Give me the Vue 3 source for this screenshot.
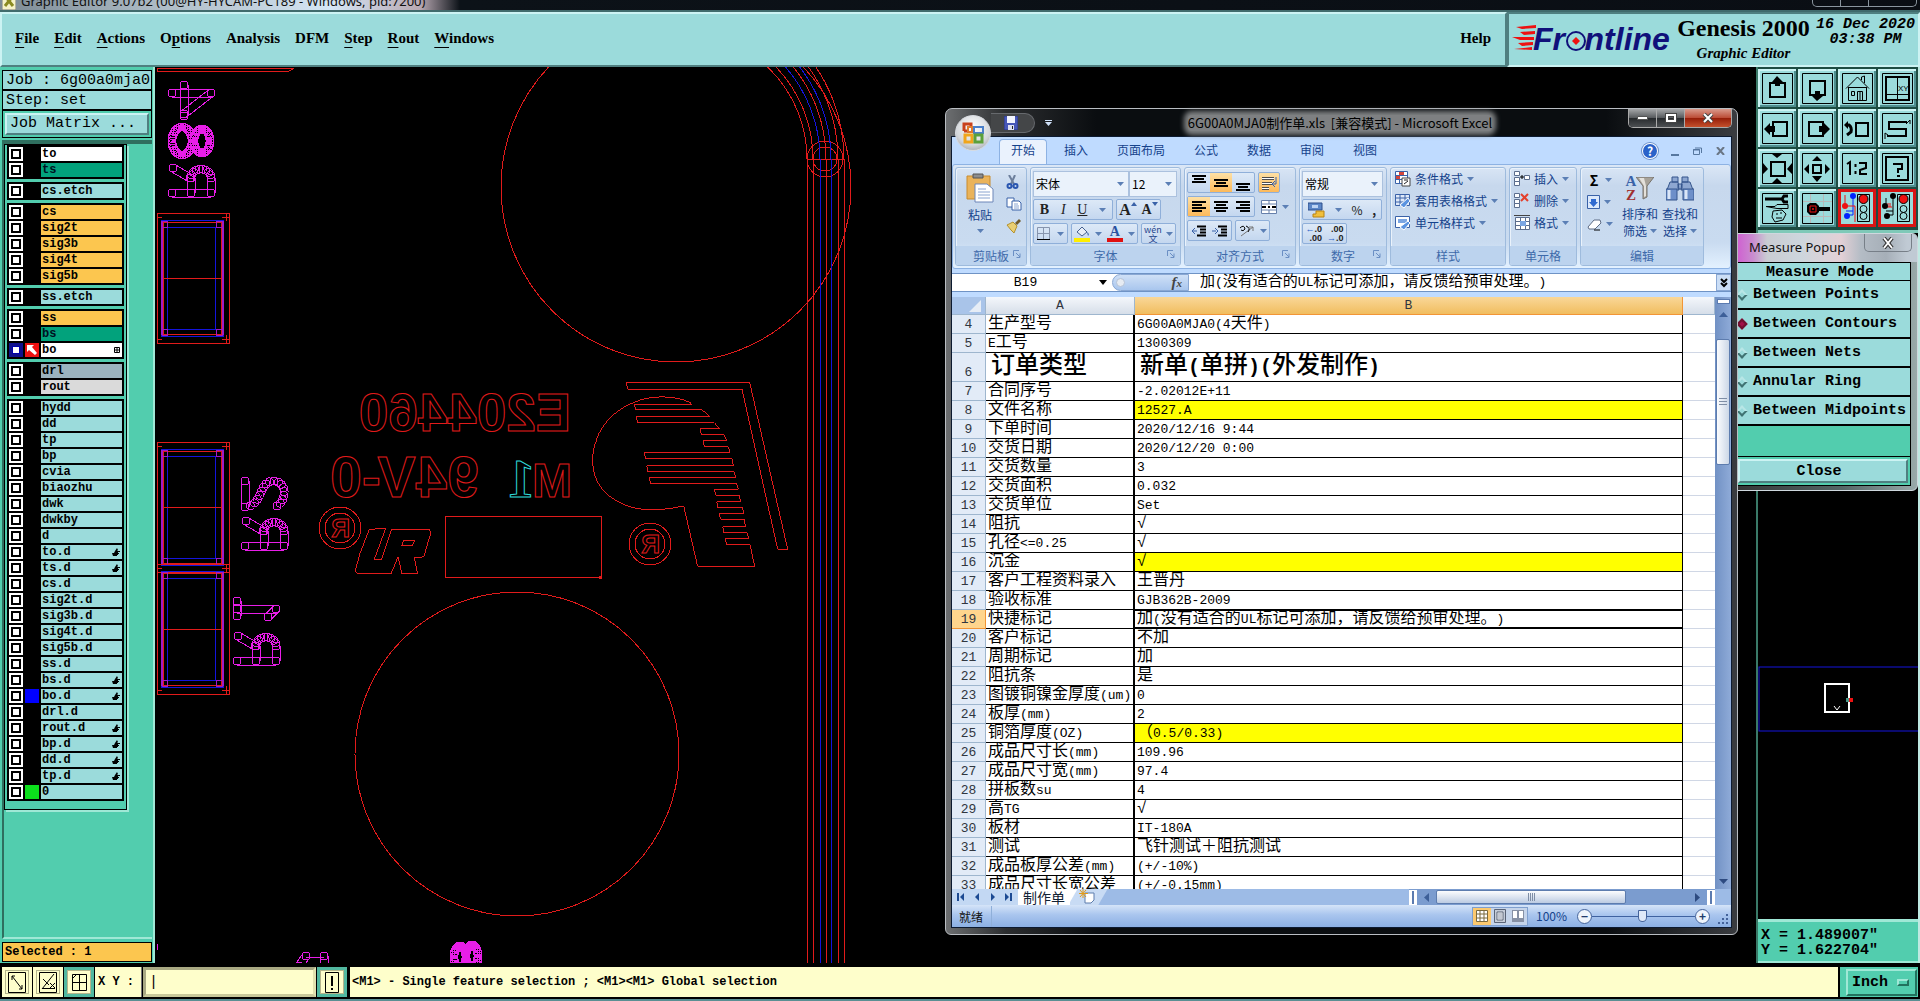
<script setup>
import { h } from 'vue'

const K = '#000'
const Icon = (props) =>
  h(
    'svg',
    { viewBox: `0 0 ${props.w} ${props.h || props.w}`, width: props.w, height: props.h || props.w, 'aria-hidden': 'true', style: 'display:block;flex:none' },
    props.s.map(([d, fill, stroke, sw]) => h('path', { d, fill: fill || 'none', stroke: stroke || 'none', 'stroke-width': sw || 1 }))
  )
Icon.props = ['w', 'h', 's']

const menus = [
  ['', 'F', 'ile'], ['', 'E', 'dit'], ['', 'A', 'ctions'], ['O', 'p', 'tions'], ['Analysis', '', ''],
  ['DFM', '', ''], ['', 'S', 'tep'], ['', 'R', 'out'], ['', 'W', 'indows'],
]

const row = (n, c = 'aqua', x = {}) => ({ n, c, ...x })
const layerGroups = [
  [row('to', 'white'), row('ts', 'green')],
  [row('cs.etch')],
  [row('cs', 'gold'), row('sig2t', 'gold'), row('sig3b', 'gold'), row('sig4t', 'gold'), row('sig5b', 'gold')],
  [row('ss.etch')],
  [row('ss', 'gold'), row('bs', 'green'), row('bo', 'white', { on: true, work: true, grid: true })],
  [row('drl', 'slate'), row('rout', 'grey')],
  [
    ...['hydd', 'dd', 'tp', 'bp', 'cvia', 'biaozhu', 'dwk', 'dwkby', 'd'].map((n) => row(n)),
    row('to.d', 'aqua', { hand: true }), row('ts.d', 'aqua', { hand: true }), row('cs.d'), row('sig2t.d'), row('sig3b.d'),
    row('sig4t.d'), row('sig5b.d'), row('ss.d'), row('bs.d', 'aqua', { hand: true }),
    row('bo.d', 'aqua', { hand: true, chip: 'blue' }), row('drl.d'), row('rout.d', 'aqua', { hand: true }),
    row('bp.d', 'aqua', { hand: true }), row('dd.d', 'aqua', { hand: true }), row('tp.d', 'aqua', { hand: true }),
    row('0', 'aqua', { chip: 'lime' }),
  ],
]
const handIcon = [['M0 5 H2 L3 3 L5 0 L6 2 L5 3 H8 V4 H6 V5 H7 V6 H6 V7 H5 V8 H1 Z', K]]
const arrowIcon = [['M0 0 H14 V14 H0 Z', '#e11'], ['M2 2 H9 L7 4 L12 10 L10 12 L4 7 L2 9 Z', '#fff']]
const gridIcon = [['M0.5 0.5 H5.5 V5.5 H0.5 Z M3 0 V6 M0 3 H6', 'none', K]]

const frame = ['M4.5 4.5 H34.5 V34.5 H4.5 Z', 'none', K]
const tools = [
  { t: 'Pan up', s: [frame, ['M12 14 H27 V28 H12 Z', 'none', K, 2], ['M19 7 L25 13 H22 V17 H17 V13 H14 Z', K]] },
  { t: 'Pan down', s: [frame, ['M12 12 H27 V26 H12 Z', 'none', K, 2], ['M19 32 L25 27 H22 V22 H17 V27 H14 Z', K]] },
  { t: 'Home', s: [frame, ['M8 19.5 L19.5 8 L31 19.5 M10.5 18 V31.5 H28.5 V18 M10 18.5 H29 M23.5 11 V8 L26.5 7 V14 M13.5 22.5 H16.5 V26.5 H13.5 Z M19.5 31 V22.5 H24.5 V31 M22 23 V31', 'none', K]] },
  { t: 'Window XY', xy: true, s: [frame, ['M8 8 H31 V31 H8 Z', 'none', K, 2], ['M19.5 8 V31 M8 25.5 H31', 'none', K]] },
  { t: 'Pan left', s: [frame, ['M15 13 H29 V27 H15 Z', 'none', K, 2], ['M6 20 L12 14 V17 H17 V23 H12 V26 Z', K]] },
  { t: 'Pan right', s: [frame, ['M11 13 H25 V27 H11 Z', 'none', K, 2], ['M32 20 L26 14 V17 H21 V23 H26 V26 Z', K]] },
  { t: 'Previous view', s: [frame, ['M18 14 H30 V27 H18 Z', 'none', K, 2], ['M8 16 H11 Q14 18 13 23 L9 26', 'none', K, 3], ['M6 16 L10 12 V20 Z', K]] },
  { t: 'Serpentine', s: [frame, ['M29 13 H11 V20 H28 V27 H9', 'none', K, 2], ['M28 15 L32 11 M32 11 V15 M10 26 L7 24 M7 24 V30', 'none', K]] },
  { t: 'Zoom out', s: [frame, ['M13 13 H27 V27 H13 Z', 'none', K, 2], ['M14 5 H24 L19 9 Z M14 34 H24 L19 29 Z M5 14 V25 L10 20 Z M34 14 V25 L29 20 Z', K]] },
  { t: 'Zoom in', s: [frame, ['M15 16 H23 V24 H15 Z', 'none', K, 2], ['M14 12 H24 L19 7 Z M14 27 H24 L19 33 Z M11 15 V25 L6 20 Z M27 15 V25 L32 20 Z', K]] },
  { t: 'Scale', s: [frame, ['M9 15 L12 13 V26 M17.5 15 V18 M17.5 22 V25 M21 14 H28 V19 L22 21 V25 H29', 'none', K, 2]] },
  { t: 'Help', s: [frame, ['M8 8 H30 V31 H8 Z', 'none', K, 2], ['M16 16 V15 H24 V20 H20 V24 M19 27 H22', 'none', K, 2]] },
  { t: 'Settings', s: [frame, ['M7 10 H24 M24 10 L26 7 H30 M24 10 L26 13 H30', 'none', K, 3], ['M8 17.5 H17 L19 15.5 H30 V19.5 H19 Z', 'none', K], ['M15 22 L24 21 L28 25 L25 31 L17 33 L14 28 Z M18 25 H20 M22 24 H24 M18 29 H24', 'none', K]] },
  { t: 'Net view', s: [frame, ['M12.5 5 V34 M25.5 5 V34 M5 12.5 H34 M5 27.5 H34', 'none', '#b9b9b9'], ['M20 20 H32', 'none', K, 4], ['M9 16 L12 14 H18 L21 17 V23 L18 26 H12 L9 23 Z', K], ['M12 17 H18 V23 H12 Z M14.5 19.5 H15.5 V20.5 H14.5 Z', 'none', '#e11', 1]] },
  { t: 'Electrical check', red: true, s: [['M15 7 V22 H8 M15 22 V26 H10', 'none', '#02f'], ['M7 17 H17 V33 M7 17 V6', 'none', '#e11'], ['M12 7 A3 3 0 1 0 18 7 A3 3 0 1 0 12 7 M6 27 A3 3 0 1 0 12 27 A3 3 0 1 0 6 27', '#02f'], ['M4 17 A3 3 0 1 0 10 17 A3 3 0 1 0 4 17', '#e11'], ['M19.5 5.5 H31.5 V32.5 H19.5 Z M22 20 A3 3 0 1 0 29 20 A3 3 0 1 0 22 20 M22 27 A3 3 0 1 0 29 27 A3 3 0 1 0 22 27', 'none', K], ['M21 10 A4 4 0 1 0 30 10 A4 4 0 1 0 21 10', '#e11', K]] },
  { t: 'Connectivity check', red: true, s: [['M15 7 V22 H8 M8 17 V9 M15 22 V26 H10', 'none', K], ['M9 18 H14 M10 14 V18 M12 14 V18', 'none', '#e11'], ['M12 7 A3 3 0 1 0 18 7 A3 3 0 1 0 12 7 M6 27 A3 3 0 1 0 12 27 A3 3 0 1 0 6 27 M4 17 A3 3 0 1 0 10 17 A3 3 0 1 0 4 17', K], ['M19.5 5.5 H31.5 V32.5 H19.5 Z M22 20 A3 3 0 1 0 29 20 A3 3 0 1 0 22 20 M22 27 A3 3 0 1 0 29 27 A3 3 0 1 0 22 27', 'none', K], ['M21 10 A4 4 0 1 0 30 10 A4 4 0 1 0 21 10', '#e11', K]] },
]

const modes = ['Between Points', 'Between Contours', 'Between Nets', 'Annular Ring', 'Between Midpoints']

const pads = [
  { y: 213, b: 343, m: 278 },
  { y: 442, b: 572, m: 507 },
  { y: 564, b: 694, m: 629 },
]
const tracks = [
  { x: 807, c: '#e11b1b' }, { x: 813, c: '#e11b1b' }, { x: 820, c: '#1414dc' }, { x: 826, c: '#e11b1b' },
  { x: 831, c: '#1414dc' }, { x: 838, c: '#e11b1b' }, { x: 844, c: '#e11b1b' },
]
const trackPath = (x) => `M${x} 963 V159 A${x - 680} ${x - 680} 0 0 0 680 ${159 - (x - 680)}`

// Legend glyphs are drawn the way the plotter does: round-capped segments and chains of apertures.
const R = 4
const dot = (x, y) => `M${x - R} ${y} a${R} ${R} 0 1 0 ${2 * R} 0 a${R} ${R} 0 1 0 ${-2 * R} 0 `
const capsule = (x1, y1, x2, y2) => {
  const len = Math.hypot(x2 - x1, y2 - y1)
  const nx = (-(y2 - y1) / len) * R
  const ny = ((x2 - x1) / len) * R
  return `M${x1 + nx} ${y1 + ny} L${x2 + nx} ${y2 + ny} M${x1 - nx} ${y1 - ny} L${x2 - nx} ${y2 - ny} ${dot(x1, y1)}${dot(x2, y2)}`
}
const chain = (cx, cy, rx, ry, from, to, step) => {
  let d = ''
  for (let a = from; a <= to; a += step) {
    const t = (a * Math.PI) / 180
    d += dot(cx + rx * Math.cos(t), cy + ry * Math.sin(t))
  }
  return d
}
const bezier = (p, n) => {
  let d = ''
  for (let i = 0; i <= n; i++) {
    const t = i / n
    const u = 1 - t
    const c = [u * u * u, 3 * u * u * t, 3 * u * t * t, t * t * t]
    d += dot(c.reduce((s, k, j) => s + k * p[j][0], 0), c.reduce((s, k, j) => s + k * p[j][1], 0))
  }
  return d
}
const glyphR = (x, y) =>
  capsule(x, y + 25, x + 39, y + 25) + capsule(x + 19, y + 25, x + 19, y + 10) + capsule(x + 39, y + 25, x + 39, y + 10) +
  capsule(x + 1, y, x + 18, y + 10) + chain(x + 29, y + 10, 10, 9, 180, 360, 20)
const legends = [
  glyphR(172, 168), glyphR(245, 521), glyphR(237, 636),
  capsule(172, 93, 211, 93) + capsule(211, 93, 184, 114) + capsule(184, 85, 184, 116),
  capsule(245, 481, 245, 507) + bezier([[245, 507], [264, 505], [258, 481], [274, 481]], 9) + bezier([[274, 481], [287, 482], [287, 500], [277, 506]], 8),
  capsule(237, 601, 237, 616) + capsule(237, 609, 276, 609) + capsule(276, 609, 268, 617),
  capsule(299, 966, 306, 956) + capsule(324, 956, 324, 970) + 'M306 957 H324',
]
const rings = [
  chain(182, 141, 10, 14, 0, 350, 10), chain(202, 141, 8, 12, 0, 350, 10),
  chain(460, 957, 6, 11, 0, 350, 10), chain(472, 956, 6, 11, 0, 350, 10),
]
const emblem =
  'M1003 133 H1175 L1170 127 C1120 105 1050 105 1000 128 C920 160 878 230 878 300 C878 380 930 415 970 433 C1020 455 1080 453 1151 438 L1193 619 H1364 L1350 554 H1280 L1276 536 H1346 L1341 518 H1272 L1268 500 H1337 L1332 478 H1262 L1258 461 H1331 L1328 443 H1254 L1250 425 H1322 L1318 406 H1247 L1243 388 H1315 L1310 371 H1052 L1048 352 H1307 L1303 335 H1044 L1040 317 H1300 L1296 296 H1037 L1033 278 H1290 L1285 260 H1213 L1210 242 H1280 L1271 224 H1204 L1201 206 H1258 L1243 188 H1013 L1009 170 H1229 L1206 149 H1007 Z'

const tabs = ['开始', '插入', '页面布局', '公式', '数据', '审阅', '视图']
const B = '#3a62a8'
const ic = {
  drop: [['M0 0 H7 L3.5 4 Z', '#5b7fb5']],
  dropBig: [['M0 0 H8 L4 5 Z', K]],
  up: [['M0 4 L3 0 L6 4 Z', '#3a62a8']],
  dn: [['M0 0 L3 4 L6 0 Z', '#3a62a8']],
  launch: [['M0.5 6 V0.5 H6 M3 3 L7 7 M7 3.5 V7.5 H3.5', 'none', '#6b8fc4']],
  paste: [['M1 3 H24 V26 H1 Z', '#eab35a', '#c98b2c'], ['M7 1 H17 V5 H7 Z', '#8d8d8d', '#555'], ['M9 11 H21 L27 16 V29 H9 Z', '#fff', '#6c86b8'], ['M12 16 H20 M12 19 H24 M12 22 H24 M12 25 H24', 'none', '#8aa4d0']],
  cut: [['M3 0 L8 9 M9 0 L5 9', 'none', '#6d7f9c', 2], ['M1.5 11 A2 2 0 1 0 5.5 11 A2 2 0 1 0 1.5 11 M7.5 11 A2 2 0 1 0 11.5 11 A2 2 0 1 0 7.5 11', 'none', '#2a56b0', 2]],
  copy: [['M1 1 H8 V10 H1 Z', '#fff', B], ['M6 4 H13 L15 6 V13 H6 Z', '#fff', B], ['M8 7 H12 M8 9 H13 M8 11 H13', 'none', '#8aa4d0']],
  brush: [['M9 4 L13 0 L15 2 L11 6 Z', '#6f5a2b'], ['M1 6 L7 3 L11 7 L8 14 L5 11 Z', '#e9cf73', '#b3902e']],
  border: [['M0.5 0.5 H12.5 V12.5 H0.5 Z M6.5 0 V13 M0 6.5 H13', 'none', '#8795ae'], ['M0 12.5 H13', 'none', K]],
  fill: [['M3 6 L8 1 L13 6 L8 10 Z', '#e8eef8', '#46618f'], ['M13 6 Q16 8 14 10 Z', B], ['M0 12 H16 V16 H0 Z', '#ffee00']],
  alignT: [['M0 1 H14 M2 4 H12 M0 7 H14', 'none', K, 2]],
  alignM: [['M0 5 H14 M2 8 H12 M0 11 H14', 'none', K, 2]],
  alignB: [['M0 9 H14 M2 12 H12 M0 15 H14', 'none', K, 2]],
  alL: [['M0 1 H14 M0 4 H10 M0 7 H14 M0 10 H10', 'none', K, 2]],
  alC: [['M0 1 H14 M2 4 H12 M0 7 H14 M2 10 H12', 'none', K, 2]],
  alR: [['M0 1 H14 M4 4 H14 M0 7 H14 M4 10 H14', 'none', K, 2]],
  wrap: [['M1 3.5 H13 M1 8.5 H11 M1 13.5 H8', 'none', '#4d4d4d', 3], ['M1 3.5 H13 M1 8.5 H11 M1 13.5 H8', 'none', '#fff'], ['M15 2 V9 H12 M14 6 L11 9 L14 12', 'none', B]],
  merge: [['M0.5 0.5 H15.5 V13.5 H0.5 Z M0 4 H16 M0 10 H16 M8 0 V4 M8 10 V14', '#fff', '#6780ab'], ['M1 7 H5 M11 7 H15', 'none', K, 2], ['M7 6 H9 V8 H7 Z', K]],
  outd: [['M6 1.5 H15 M9 4.5 H15 M9 7.5 H15 M6 10.5 H15', 'none', K, 2], ['M6 6 H2 M4 3 L1 6 L4 9', 'none', B]],
  ind: [['M6 1.5 H15 M9 4.5 H15 M9 7.5 H15 M6 10.5 H15', 'none', K, 2], ['M0 6 H4 M3 3 L6 6 L3 9', 'none', B]],
  orient: [['M2 13 L14 4 M14 8 V4 H10', 'none', '#777'], ['M1 5 Q5 1 6 6 Q4 9 2 7 M7 3 Q12 5 9 9', 'none', K]],
  money: [['M0 1 H14 V8 H0 Z', '#5c87c7', '#2d4f8c'], ['M4 3 H10 V6 H4 Z', '#bcd3f3'], ['M8 9 H16 V15 H5 V12 H8 Z', '#f0bf3c', '#b98312']],
  cond: [['M0.5 0.5 H12.5 V12.5 H0.5 Z M0 4.5 H13 M0 8.5 H13 M4.5 0 V13', '#fff', B], ['M4 1 H9 V4 H4 Z M1 5 H5 V8 H1 Z', '#d3453a'], ['M7 7 H15 V15 H7 Z', '#fff', '#444'], ['M9 9 H13 M9 13 L13 10', 'none', '#222']],
  fmt: [['M0.5 1.5 H14.5 V12.5 H0.5 Z M0 5 H15 M0 9 H15 M5 1 V13 M10 1 V13', '#dfe9f8', B], ['M5 12 L13 5 L15 8 L9 15 Z', '#5a93e0', '#fff']],
  cell: [['M0.5 1.5 H14.5 V12.5 H0.5 Z', '#fff', B], ['M3 4 H12 V8 H3 Z', '#7aa5e2'], ['M5 12 L13 6 L15 8 L9 15 Z', '#5a93e0', '#fff']],
  ins: [['M0.5 0.5 H5.5 V4.5 H0.5 Z M0.5 6.5 H5.5 V10.5 H0.5 Z M0.5 10.5 H5.5 V14.5 H0.5 Z M10.5 4.5 H15.5 V8.5 H10.5 Z', '#fff', '#5b6d8d'], ['M6 6 H10 M8 4 V8', 'none', K]],
  del: [['M0.5 0.5 H5.5 V4.5 H0.5 Z M0.5 6.5 H5.5 V10.5 H0.5 Z M0.5 10.5 H5.5 V14.5 H0.5 Z', '#fff', '#5b6d8d'], ['M7 1 L14 8 M14 1 L7 8', 'none', '#e4402c', 2]],
  form: [['M1.5 2.5 H15.5 V14.5 H1.5 Z M1 6.5 H16 M1 10.5 H16 M6.5 2 V15 M11.5 2 V15', '#fff', '#5b6d8d'], ['M6 6 H12 V11 H6 Z', '#7aa5e2'], ['M0 0.5 H16', 'none', '#444']],
  down: [['M0.5 0.5 H12.5 V13.5 H0.5 Z', '#dce9fb', B], ['M4 4 H9 V7 H11 L6.5 12 L2 7 H4 Z', '#2f6ad0']],
  erase: [['M1 9 L7 2 H13 L14 5 L8 11 H2 Z', '#fff', '#5e6c85'], ['M7 12 H13', 'none', K]],
  funnel: [['M0 0 H18 L11 9 V20 L7 22 V9 Z', '#a8a39a', '#77736c'], ['M3 1 H8 L10 9 V19 L8 20 V9 Z', '#e4e1db']],
  find: [['M6 2 H12 V7 H6 Z M16 2 H22 V7 H16 Z M4 7 H12 L13 15 H1 Z M16 7 H24 L27 15 H15 Z M12 9 H16 V14 H12 Z', '#8ea7d1', '#34558c'], ['M0 14 H11 V25 H0 Z M17 14 H28 V25 H17 Z', '#6d8fc9', '#34558c'], ['M3 15 V24 M20 15 V24', 'none', '#dbe6f7', 3]],
  save: [['M0 0 H14 V14 H0 Z', '#4757b8', '#29347e'], ['M3 0 H11 V7 H3 Z', '#f2f4ff'], ['M4 9 H10 V14 H4 Z', '#dcdff2'], ['M8 10 H9 V13 H8 Z', '#222']],
  office: [['M3 10 V3 H10 V6 M6 10 H3', 'none', '#c8401c', 3], ['M7 6 H11 V11 H7 Z', 'none', '#e07a2c', 2], ['M13 6 H22 V12 H13 Z', 'none', '#4a7fc9', 2], ['M4 14 H11 V21 H4 Z', 'none', '#f0a51c', 3], ['M14 14 H21 V21 H14 Z', 'none', '#5ba03a', 3]],
  navFirst: [['M1 0 V8', 'none', '#1d4a92', 2], ['M7 0 V8 L3 4 Z', '#1d4a92']],
  navPrev: [['M5 0 V8 L1 4 Z', '#1d4a92']],
  navNext: [['M1 0 V8 L5 4 Z', '#1d4a92']],
  navLast: [['M6 0 V8', 'none', '#1d4a92', 2], ['M0 0 V8 L4 4 Z', '#1d4a92']],
  newTab: [['M6 4 H15 V11 L12 14 H6 Z', '#fff', '#5d7dad'], ['M4 0 V9 M0 4.5 H9 M1 1 L7 8 M7 1 L1 8', 'none', '#e09a1a']],
  vNorm: [['M1.5 1.5 H12.5 V12.5 H1.5 Z M1 5 H13 M1 9 H13 M5 1 V13 M9 1 V13', '#fff', '#7b6a3e']],
  vPage: [['M1.5 0.5 H12.5 V13.5 H1.5 Z', '#c5ccd8', '#5a6477'], ['M4 3 H10 V11 H4 Z', '#fff', '#5a6477'], ['M5 5 H9 M5 7 H9 M5 9 H9', 'none', '#8791a5']],
  vBreak: [['M1 1 H13 V13 H1 Z', '#8791a5'], ['M2 2 H6 V9 H2 Z M8 2 H12 V9 H8 Z', '#fff']],
  grip: [['M8 0 H10 V2 H8 Z M4 4 H6 V6 H4 Z M8 4 H10 V6 H8 Z M0 8 H2 V10 H0 Z M4 8 H6 V10 H4 Z M8 8 H10 V10 H8 Z', '#44639b']],
  select: [['M2.5 2.5 H19.5 V22.5 H2.5 Z', 'none', K], ['M6 6 L16 19 M6 10 V6 H9 M16 15 V19 H13', 'none', K]],
  angle: [['M2.5 2.5 H19.5 V22.5 H2.5 Z', 'none', K], ['M17 4 L5 19 M5 18.5 H18 M6 9 L12 15 M13 13 L18 18 M18 13 L13 18', 'none', K]],
  snap: [['M4.5 4.5 H18.5 V20.5 H4.5 Z M11.5 4 V21 M4 12.5 H19 M4 9 L9 4', 'none', K]],
}

const sheet = [
  [4, '生产型号', '6G00A0MJA0(4天件)'], [5, 'E工号', '1300309'], [6, '订单类型', '新单(单拼)(外发制作)', 'big'],
  [7, '合同序号', '-2.02012E+11'], [8, '文件名称', '12527.A', 'hl'], [9, '下单时间', '2020/12/16 9:44'],
  [10, '交货日期', '2020/12/20 0:00'], [11, '交货数量', '3'], [12, '交货面积', '0.032'], [13, '交货单位', 'Set'],
  [14, '阻抗', '√'], [15, '孔径<=0.25', '√'], [16, '沉金', '√', 'hl'], [17, '客户工程资料录入', '王晋丹'],
  [18, '验收标准', 'GJB362B-2009'], [19, '快捷标记', '加(没有适合的UL标记可添加，请反馈给预审处理。)', 'sel'],
  [20, '客户标记', '不加'], [21, '周期标记', '加'], [22, '阻抗条', '是'], [23, '图镀铜镍金厚度(um)', '0'], [24, '板厚(mm)', '2'],
  [25, '铜箔厚度(OZ)', '（0.5/0.33)', 'hl'], [26, '成品尺寸长(mm)', '109.96'], [27, '成品尺寸宽(mm)', '97.4'], [28, '拼板数su', '4'],
  [29, '高TG', '√'], [30, '板材', 'IT-180A'], [31, '测试', '飞针测试＋阻抗测试'], [32, '成品板厚公差(mm)', '(+/-10%)'],
  [33, '成品尺寸长宽公差', '(+/-0.15mm)'],
]
const runs = (t) => t.match(/[\x20-\x7e]+|[^\x20-\x7e]+/g).map((s) => ({ s, latin: s.charCodeAt(0) < 127 }))
const formula = sheet[15][2]
</script>

<template>
  <div class="app">
    <header class="titlebar">
      <Icon :w="14" :h="18" :s="[['M0 0 H14 V18 H0 Z', '#f5f2c8', '#777'], ['M3 4 L11 14 M11 4 L3 14', 'none', '#8a8a20', 3]]" />
      <span>Graphic Editor 9.07b2 (00@HY-HYCAM-PC189 - Windows, pid:7200)</span>
      <i class="caps"><b></b><b></b><b></b></i>
    </header>

    <div class="top">
      <nav class="menubar">
        <button v-for="m in menus" :key="m.join('')">{{ m[0] }}<u>{{ m[1] }}</u>{{ m[2] }}</button>
        <button class="help">Help</button>
      </nav>
      <div class="brand">
        <svg width="162" height="56" viewBox="0 0 162 56" class="logo">
          <path d="M4 13 L24 11 V14 L10 15 Z M8 18 L23 17 V20 L12 21 Z M0 23 L22 23 V26 H8 Z M6 29 L21 28 V31 L10 32 Z M2 35 L20 33 V36 Z" fill="#e11" />
          <text x="21" y="36" class="mark">Fr<tspan fill="none">o</tspan>ntline</text>
          <circle cx="64" cy="27" r="9" fill="none" stroke="#10107a" stroke-width="2" />
          <path d="M64 23 L68 27 L64 31 L60 27 Z" fill="#e11" />
        </svg>
        <div class="product"><strong>Genesis 2000</strong><em>Graphic Editor</em></div>
        <time>16 Dec 2020<br />03:38 PM</time>
      </div>
    </div>

    <main class="work">
      <aside class="side">
        <div class="job">Job : 6g00a0mja0</div>
        <div class="job">Step: set</div>
        <div class="matrix"><button>Job Matrix ...</button></div>
        <div class="panel">
          <div class="layers">
            <div v-for="(g, i) in layerGroups" :key="i" class="group">
              <label v-for="r in g" :key="r.n" class="layer">
                <input type="checkbox" :checked="r.on" />
                <span class="chip" :class="r.chip"><Icon v-if="r.work" :w="14" :s="arrowIcon" /></span>
                <span class="name" :class="r.c">{{ r.n }}<Icon v-if="r.hand" :w="8" :s="handIcon" /><Icon v-if="r.grid" :w="6" :s="gridIcon" /></span>
              </label>
            </div>
          </div>
        </div>
        <div class="selected">Selected : 1</div>
      </aside>

      <section class="canvas">
        <svg class="cad" width="100%" height="100%" shape-rendering="crispEdges">
          <g transform="translate(-155 -67)" fill="none">
            <g stroke="#e11b1b">
              <circle cx="676" cy="187" r="175" />
              <circle cx="517" cy="754" r="162" />
              <path d="M157 68.500 H294 L288 71.500 H157 Z" />
              <circle cx="825" cy="159" r="18" /><circle cx="825" cy="159" r="12" />
              <path d="M807 159.500 H844" />
            </g>
            <path v-for="t in tracks" :key="t.x" :d="trackPath(t.x)" :stroke="t.c" />
            <g v-for="p in pads" :key="p.y">
              <rect x="157" :y="p.y" width="72" :height="p.b - p.y" stroke="#e11b1b" />
              <rect x="161" :y="p.y + 7" width="62" :height="p.b - p.y - 14" stroke="#1414dc" />
              <rect x="163" :y="p.y + 9" width="58" :height="p.b - p.y - 18" stroke="#e11b1b" />
              <path :d="`M161.500 ${p.y + 8} V${p.b - 8} M222.500 ${p.y + 8} V${p.b - 8}`" stroke="#a01ac8" stroke-width="2" />
              <rect x="167" :y="p.y + 14" width="48" :height="p.b - p.y - 28" stroke="#1414dc" />
              <path :d="`M163 ${p.m} H221`" stroke="#e11b1b" />
              <path :d="`M222 ${p.y + 4} h8 m-4 -4 v8 M222 ${p.b - 4} h8 m-4 -4 v8 M157 ${p.y + 4} h5 M157 ${p.b - 4} h5`" stroke="#e11b1b" />
              <path :d="`M162 ${p.y + 8} h5 v6 h-5 M216 ${p.y + 8} h6 v6 h-6 Z M162 ${p.b - 8} h5 v-6 h-5 M216 ${p.b - 8} h6 v-6 h-6 Z`" stroke="#a01ac8" />
            </g>
            <g stroke="#e81ee8">
              <path v-for="d in legends" :key="d" :d="d" />
              <path v-for="d in rings" :key="d" :d="d" />
            </g>
            <g stroke="#e11b1b" class="mirror">
              <text transform="translate(571 431) scale(-1 1)">E204460</text>
              <text transform="translate(572 497) scale(-1 1)" class="em">M</text>
              <text transform="translate(479 497) scale(-1 1)" class="wide94">94V-0</text>
              <text transform="translate(535 497) scale(-1 1)" class="one" stroke="#2fd9d9">1</text>
              <text transform="translate(350 537) scale(-1 1)" class="reg">R</text>
              <text transform="translate(660 553) scale(-1 1)" class="reg">R</text>
            </g>
            <g stroke="#e11b1b">
              <circle cx="340" cy="528" r="21" /><circle cx="340" cy="528" r="15" />
              <circle cx="650" cy="544" r="21" /><circle cx="650" cy="544" r="15" />
              <rect x="445" y="516" width="156" height="61" />
              <rect x="599" y="576" width="2" height="2" fill="#e11b1b" />
            </g>
            <g transform="translate(300 360) scale(0.333333)" stroke="#e11b1b" stroke-width="3">
              <path d="M979 67 H1349 L1463 568 H1433 L1326 88 H983 Z" />
              <path :d="emblem" />
              <path d="M208 508 L257 505 L223 598 H245 L275 508 H388 L392 520 L372 588 L366 592 H343 L353 642 H306 L294 590 L273 642 H172 L166 632 L180 580 Z M312 541 H344 L336 558 H304 Z" />
            </g>
            <path d="M157 944 V950" stroke="#e81ee8" />
          </g>
        </svg>
      </section>

      <aside class="right">
        <div class="tools">
          <button v-for="t in tools" :key="t.t" :aria-label="t.t" :class="{ red: t.red }">
            <Icon :w="38" :s="t.s" /><small v-if="t.xy">XY</small>
          </button>
        </div>
        <div class="overview">
          <svg width="100%" height="66" class="band">
            <rect x="1" y="1" width="400" height="64" fill="none" stroke="#1414dc" />
            <path d="M67 18 H91 V46 H67 Z" fill="none" stroke="#fff" stroke-width="2" />
            <path d="M76 40 L79 44 L82 40" fill="none" stroke="#fff" />
            <path d="M88 32 H95 V36 H88 Z" fill="#e11" />
            <path d="M88 32 H91 V36 H88 Z" fill="#4a9a8a" />
          </svg>
        </div>
        <div class="coords">X = 1.489007"<br />Y = 1.622704"</div>
      </aside>
    </main>

    <footer class="foot">
      <button class="fb" aria-label="Select"><Icon :w="22" :h="25" :s="ic.select" /></button>
      <button class="fb" aria-label="Angle"><Icon :w="22" :h="25" :s="ic.angle" /></button>
      <button class="fb teal" aria-label="Snap grid"><Icon :w="22" :h="25" :s="ic.snap" /></button>
      <label class="xy" for="xy">X Y :</label>
      <input id="xy" type="text" value="|" />
      <button class="fb teal" aria-label="Alert"><Icon :w="22" :h="25" :s="[['M4.500 2.500 H17.500 V22.500 H4.500 Z', 'none', '#000'], ['M11 6 V16 M11 18 V20', 'none', '#000', 2]]" /></button>
      <output class="msg">&lt;M1&gt; - Single feature selection ; &lt;M1&gt;&lt;M1&gt; Global selection</output>
      <div class="units"><button>Inch<i></i></button></div>
    </footer>

    <section class="popup">
      <div class="phead"><span>Measure Popup</span><button aria-label="Close popup"><Icon :w="12" :s="[['M2 1 L10 11 M10 1 L2 11', 'none', '#333', 4], ['M2 1 L10 11 M10 1 L2 11', 'none', '#fff', 2]]" /></button></div>
      <div class="pbody">
        <div class="pmode">Measure Mode</div>
        <label v-for="(m, i) in modes" :key="m"><input type="radio" name="mode" :checked="i === 1" /><span>{{ m }}</span></label>
        <div class="pclose"><button>Close</button></div>
      </div>
    </section>

    <section class="excel">
      <div class="xtitle">
        <div class="qat"><Icon :w="14" :s="ic.save" /></div>
        <Icon :w="7" :h="6" :s="[['M0 0.500 H7', 'none', '#cfe0f8'], ['M0 2 H7 L3.500 6 Z', '#cfe0f8']]" />
        <div class="doc"><span>6G00A0MJA0制作单.xls&nbsp; [兼容模式] - Microsoft Excel</span></div>
        <div class="wctl">
          <button aria-label="Minimise"><Icon :w="12" :h="4" :s="[['M0.500 0.500 H10.500 V3.500 H0.500 Z', '#fff', '#555']]" /></button>
          <button aria-label="Maximise"><Icon :w="12" :h="10" :s="[['M2 2 H10 V8 H2 Z', 'none', '#444', 4], ['M2 2 H10 V8 H2 Z', 'none', '#fff', 2]]" /></button>
          <button class="x" aria-label="Close"><Icon :w="12" :h="10" :s="[['M2 1 L10 9 M10 1 L2 9', 'none', '#444', 4], ['M2 1 L10 9 M10 1 L2 9', 'none', '#fff', 2]]" /></button>
        </div>
      </div>
      <button class="orb" aria-label="Office"><Icon :w="24" :s="ic.office" /></button>

      <div class="client">
        <div class="tabs">
          <button v-for="(t, i) in tabs" :key="t" :class="{ on: i === 0 }">{{ t }}</button>
          <div class="mdi">
            <button class="q" aria-label="Help">?</button>
            <Icon :w="8" :h="10" :s="[['M0 9 H8', 'none', '#56779f', 2]]" />
            <Icon :w="9" :h="8" :s="[['M0.500 2.500 H6.500 V7.500 H0.500 Z M2 1 H8.500 V6 M0 3 H7', 'none', '#56779f']]" />
            <Icon :w="9" :h="8" :s="[['M1 0 L8 8 M8 0 L1 8', 'none', '#6a7685', 2]]" />
          </div>
        </div>

        <div class="ribbon">
          <div class="rg g1">
            <div class="rb">
              <button class="bigb"><Icon :w="28" :h="30" :s="ic.paste" /><span>粘贴</span><Icon :w="7" :h="4" :s="ic.drop" /></button>
              <div class="col3"><Icon :w="13" :h="14" :s="ic.cut" /><Icon :w="16" :h="14" :s="ic.copy" /><Icon :w="16" :h="14" :s="ic.brush" /></div>
            </div>
            <div class="rl">剪贴板<Icon :w="8" :s="ic.launch" /></div>
          </div>

          <div class="rg g2">
            <div class="rb rows">
              <div class="rr tall">
                <div class="combo wide"><select aria-label="字体"><option>宋体</option></select><Icon :w="7" :h="4" :s="ic.drop" /></div>
                <div class="combo size"><select aria-label="字号"><option>12</option></select><Icon :w="7" :h="4" :s="ic.drop" /></div>
              </div>
              <div class="rr">
                <div class="bx w80"><b class="ser">B</b><i class="ser">I</i><u class="ser">U</u><Icon :w="7" :h="4" :s="ic.drop" /></div>
                <div class="bx w45"><span class="az2"><b class="ser lg">A</b><Icon :w="6" :h="4" :s="ic.up" /></span><span class="az2"><b class="ser">A</b><Icon :w="6" :h="4" :s="ic.dn" /></span></div>
              </div>
              <div class="rr">
                <div class="bx w35"><Icon :w="13" :s="ic.border" /><Icon :w="7" :h="4" :s="ic.drop" /></div>
                <div class="bx w67"><Icon :w="16" :s="ic.fill" /><Icon :w="7" :h="4" :s="ic.drop" /><b class="ser acol">A</b><Icon :w="7" :h="4" :s="ic.drop" /></div>
                <div class="bx w35"><span class="wen">wén<br />文</span><Icon :w="7" :h="4" :s="ic.drop" /></div>
              </div>
            </div>
            <div class="rl">字体<Icon :w="8" :s="ic.launch" /></div>
          </div>

          <div class="rg g3">
            <div class="rb rows r3">
              <div class="rr">
                <div class="bx seg"><span><Icon :w="14" :h="16" :s="ic.alignT" /></span><span class="hot"><Icon :w="14" :h="16" :s="ic.alignM" /></span><span><Icon :w="14" :h="16" :s="ic.alignB" /></span></div>
                <div class="bx hot w22"><Icon :w="16" :s="ic.wrap" /></div>
              </div>
              <div class="rr">
                <div class="bx seg"><span class="hot"><Icon :w="14" :h="12" :s="ic.alL" /></span><span><Icon :w="14" :h="12" :s="ic.alC" /></span><span><Icon :w="14" :h="12" :s="ic.alR" /></span></div>
                <div class="mg"><Icon :w="16" :h="14" :s="ic.merge" /><Icon :w="7" :h="4" :s="ic.drop" /></div>
              </div>
              <div class="rr">
                <div class="bx w45"><Icon :w="16" :h="12" :s="ic.outd" /><Icon :w="16" :h="12" :s="ic.ind" /></div>
                <div class="bx w35"><Icon :w="16" :s="ic.orient" /><Icon :w="7" :h="4" :s="ic.drop" /></div>
              </div>
            </div>
            <div class="rl">对齐方式<Icon :w="8" :s="ic.launch" /></div>
          </div>

          <div class="rg g4">
            <div class="rb rows">
              <div class="rr tall"><div class="combo full"><select aria-label="数字格式"><option>常规</option></select><Icon :w="7" :h="4" :s="ic.drop" /></div></div>
              <div class="rr"><div class="bx w80"><Icon :w="17" :h="16" :s="ic.money" /><Icon :w="7" :h="4" :s="ic.drop" /><span>%</span><b>,</b></div></div>
              <div class="rr"><div class="bx w45 dec"><span><em>←</em>.0<br />.00</span><span>.00<br /><em>→</em>.0</span></div></div>
            </div>
            <div class="rl">数字<Icon :w="8" :s="ic.launch" /></div>
          </div>

          <div class="rg g5">
            <div class="rb list">
              <button><Icon :w="16" :s="ic.cond" />条件格式<Icon :w="7" :h="4" :s="ic.drop" /></button>
              <button><Icon :w="16" :s="ic.fmt" />套用表格格式<Icon :w="7" :h="4" :s="ic.drop" /></button>
              <button><Icon :w="16" :s="ic.cell" />单元格样式<Icon :w="7" :h="4" :s="ic.drop" /></button>
            </div>
            <div class="rl">样式</div>
          </div>

          <div class="rg g6">
            <div class="rb list">
              <button><Icon :w="16" :s="ic.ins" />插入<Icon :w="7" :h="4" :s="ic.drop" /></button>
              <button><Icon :w="16" :s="ic.del" />删除<Icon :w="7" :h="4" :s="ic.drop" /></button>
              <button><Icon :w="16" :s="ic.form" />格式<Icon :w="7" :h="4" :s="ic.drop" /></button>
            </div>
            <div class="rl">单元格</div>
          </div>

          <div class="rg g7">
            <div class="rb">
              <div class="list">
                <button><b class="sum">Σ</b><Icon :w="7" :h="4" :s="ic.drop" /></button>
                <button><Icon :w="13" :h="14" :s="ic.down" /><Icon :w="7" :h="4" :s="ic.drop" /></button>
                <button><Icon :w="15" :h="13" :s="ic.erase" /><Icon :w="7" :h="4" :s="ic.drop" /></button>
              </div>
              <button class="bigb two"><span class="az"><span class="ser">A<br /><b>Z</b></span><Icon :w="18" :h="23" :s="ic.funnel" /></span><span>排序和</span><span class="ln">筛选<Icon :w="7" :h="4" :s="ic.drop" /></span></button>
              <button class="bigb two"><span class="az"><Icon :w="28" :h="26" :s="ic.find" /></span><span>查找和</span><span class="ln">选择<Icon :w="7" :h="4" :s="ic.drop" /></span></button>
            </div>
            <div class="rl">编辑</div>
          </div>
        </div>

        <div class="fbar">
          <div class="nbox"><input aria-label="名称框" value="B19" /><Icon :w="8" :h="5" :s="ic.dropBig" /></div>
          <div class="fx"><i></i><span>f<small>x</small></span></div>
          <div class="ftext"><span v-for="(r, i) in runs(formula)" :key="i" :class="{ lat: r.latin }">{{ r.s }}</span></div>
          <button aria-label="展开编辑栏"><Icon :w="8" :h="10" :s="[['M1 1 L4 4 L7 1 M1 5 L4 8 L7 5', 'none', '#000', 2]]" /></button>
        </div>

        <div class="grid">
          <div class="cells">
            <table>
              <colgroup><col class="c0" /><col class="ca" /><col class="cb" /><col /></colgroup>
              <thead><tr><th class="corner"><i></i></th><th>A</th><th class="on">B</th><th></th></tr></thead>
              <tbody>
                <tr v-for="r in sheet" :key="r[0]" :class="r[3]">
                  <th>{{ r[0] }}</th>
                  <td><div><span v-for="(p, i) in runs(r[1])" :key="i" :class="{ lat: p.latin }">{{ p.s }}</span></div></td>
                  <td><div><span v-for="(p, i) in runs(r[2])" :key="i" :class="{ lat: p.latin }">{{ p.s }}</span></div></td>
                  <td></td>
                </tr>
              </tbody>
            </table>
          </div>
          <div class="vs">
            <i class="split"></i><Icon :w="9" :h="5" :s="[['M0 5 H9 L4.500 0 Z', '#3d5f98']]" />
            <i class="thumb"></i><Icon :w="9" :h="5" :s="[['M0 0 H9 L4.500 5 Z', '#2d4a80']]" />
          </div>
        </div>

        <div class="stabs">
          <div class="nav"><Icon :w="8" :s="ic.navFirst" /><Icon :w="6" :h="8" :s="ic.navPrev" /><Icon :w="6" :h="8" :s="ic.navNext" /><Icon :w="8" :s="ic.navLast" /></div>
          <button class="st">制作单</button>
          <div class="nt"><Icon :w="16" :h="15" :s="ic.newTab" /></div>
          <div class="hs">
            <i class="sp"></i><Icon :w="5" :h="9" :s="[['M5 0 V9 L0 4.500 Z', '#3d5f98']]" />
            <i class="ht"></i><Icon :w="5" :h="9" :s="[['M0 0 V9 L5 4.500 Z', '#2d4a80']]" /><i class="sp"></i>
          </div>
        </div>
        <div class="status">
          <span class="ready">就绪</span>
          <div class="views"><span class="hot"><Icon :w="14" :s="ic.vNorm" /></span><span><Icon :w="14" :s="ic.vPage" /></span><span><Icon :w="14" :s="ic.vBreak" /></span></div>
          <span class="pct">100%</span>
          <button class="rnd">−</button>
          <input type="range" aria-label="显示比例" min="0" max="100" value="49" />
          <button class="rnd">+</button>
          <Icon :w="10" :s="ic.grip" />
        </div>
      </div>
    </section>
  </div>
</template>

<style>
body { background: #000; overflow: hidden; }
</style>

<style scoped>
* { box-sizing: border-box; }
button, input, select { font: inherit; color: inherit; border: 0; padding: 0; margin: 0; background: none; border-radius: 0; }
.app { position: relative; height: 100vh; display: flex; flex-direction: column; background: #000; color: #000; font-family: "Liberation Mono", monospace; overflow: hidden; text-spacing-trim: space-all; }

.titlebar { height: 10px; flex: none; display: flex; align-items: flex-end; gap: 5px; padding-left: 2px; overflow: hidden; font: 13px/17px "Noto Sans", sans-serif; color: #111; background: linear-gradient(90deg, #7c8a94 0, #aebcc6 160px, #c3d2de 260px, #d5e6f6 330px, #b8a8b2 420px, #0c1218 460px, #0a0e14 100%); }
.caps { margin-left: auto; margin-right: 3px; display: flex; height: 7px; align-self: flex-start; border: 1px solid #8a959e; border-top: 0; border-radius: 0 0 5px 5px; }
.caps b { width: 28px; border-right: 1px solid #8a959e; }
.caps b:last-child { width: 47px; border: 0; }

.top { display: flex; height: 57px; flex: none; background: #4f7f80; border-top: 2px solid #406b6c; }
.menubar { flex: 1; display: flex; align-items: center; gap: 15px; padding: 0 14px 4px 13px; background: #9bdbdb; border: 2px solid #ccf3f3; border-right-color: #4f7f80; border-bottom-color: #4f7f80; font: bold 15px/18px "Liberation Serif", serif; }
.menubar u { text-underline-offset: 4px; }
.help { margin-left: auto; }
.brand { width: 413px; display: flex; background: #9bdbdb; border: 2px solid #4f7f80; border-right-color: #ccf3f3; border-bottom-color: #ccf3f3; }
.logo { flex: none; margin-left: 3px; }
.mark { font: italic bold 32px "Liberation Sans", sans-serif; fill: #10107a; }
.product { text-align: center; width: 139px; flex: none; font-family: "Liberation Serif", serif; white-space: nowrap; }
.product strong { display: block; font-size: 24px; line-height: 28px; }
.product em { display: block; font-size: 15px; font-weight: bold; line-height: 22px; }
time { flex: 1; text-align: center; white-space: nowrap; font: italic bold 15px/15px "Liberation Mono", monospace; padding-top: 3px; }

.work { flex: 1; min-height: 0; display: flex; }
.side { width: 155px; flex: none; display: flex; flex-direction: column; background: #52cdae; border-right: 2px solid #9fe8d6; padding: 3px 1px 1px 2px; }
.job { height: 20px; flex: none; border: 1px solid #000; background: #9bdbdb; padding-left: 3px; font-size: 15px; line-height: 20px; white-space: nowrap; }
.matrix { border: 1px solid #000; padding: 2px; height: 28px; flex: none; }
.matrix button { width: 100%; height: 22px; text-align: left; padding-left: 3px; font-size: 15px; line-height: 18px; background: #9bdbdb; border: 2px solid #ccf3f3; border-right-color: #4f7f80; border-bottom-color: #4f7f80; }
.panel { flex: 1; min-height: 0; margin-top: 2px; border-top: 4px solid #2f6f5f; border-left: 2px solid #2f6f5f; border-bottom: 2px solid #9fe8d6; margin-bottom: 3px; }
.layers { width: 123px; border: 1px solid #000; padding: 0 2px 8px; display: flex; flex-direction: column; gap: 3px; box-shadow: 2px 2px 0 #9fe8d6; }
.group { background: #000; padding: 1px 2px; }
.layer { display: flex; height: 16px; align-items: center; gap: 2px; }
.layer input { appearance: none; width: 14px; height: 14px; flex: none; background: #fff; border: 2px solid #fff; box-shadow: inset 0 0 0 2px #000; }
.layer input:checked { background: #fff; border: 3px solid #10108c; box-shadow: inset 0 0 0 1px #00a; }
.chip { width: 14px; height: 14px; flex: none; }
.chip.blue { background: #00f; }
.chip.lime { background: #0ce01c; }
.name { flex: 1; height: 14px; display: flex; align-items: center; justify-content: space-between; padding: 0 2px 0 1px; font-size: 12px; font-weight: bold; line-height: 14px; }
.aqua { background: #9bdbdb; } .white { background: #fff; } .green { background: #02a27c; color: #012; } .gold { background: #fcc64f; } .slate { background: #9bb3be; } .grey { background: #dadada; }
.selected { height: 20px; flex: none; border: 1px solid #000; background: #fcc64f; font-size: 12px; font-weight: bold; line-height: 18px; padding-left: 2px; }

.canvas { flex: 1; min-width: 0; background: #000; overflow: hidden; }
.cad { display: block; }
.mirror text { font: bold 53px "Liberation Sans", sans-serif; }
.mirror .em { font-size: 48px; }
.mirror .wide94 { font-size: 57px; }
.mirror .one { font: bold 55px "Liberation Serif", serif; }
.mirror .reg { font-size: 26px; }

.right { width: 164px; flex: none; display: flex; flex-direction: column; border-left: 2px solid #3a7a68; border-right: 2px solid #bfe9e2; }
.tools { display: grid; grid-template-columns: repeat(4, 40px); grid-auto-rows: 40px; border-bottom: 3px solid #7fc9b8; padding-top: 2px; height: 166px; flex: none; background: #1d4c42; }
.tools button { position: relative; width: 38px; height: 38px; background: #9bdbdb; box-shadow: inset 2px 2px 0 #ccf3f3, inset -2px -2px 0 #4f8f8f; overflow: hidden; }
.tools .red { box-shadow: inset 0 0 0 3px #d81414; }
.tools small { position: absolute; left: 20px; top: 15px; font: 8px/10px "Liberation Sans", sans-serif; }
.overview { flex: 1; min-height: 0; display: flex; align-items: center; padding-top: 259px; }
.band { display: block; margin-bottom: 13px; }
.coords { height: 44px; flex: none; background: #52cdae; border-top: 3px solid #9fe8d6; border-bottom: 2px solid #9fe8d6; padding: 6px 3px 0; font-size: 15px; font-weight: bold; line-height: 15px; white-space: nowrap; }

.foot { height: 38px; flex: none; display: flex; background: #000; padding: 4px 2px 2px; border-bottom: 2px solid #5a8f93; gap: 1px; }
.fb { width: 30px; flex: none; background: #fefecb; border: 3px solid #fefecb; display: grid; place-items: center; box-shadow: inset 0 0 0 1px #b5b58c; }
.fb.teal { border-color: #52b8a0; }
.xy { width: 47px; background: #fefecb; font-size: 12px; font-weight: bold; line-height: 30px; padding-left: 3px; white-space: nowrap; border-right: 1px solid #777; }
.foot input { width: 173px; background: #fefecb; border: 3px solid #a9a983; border-right-color: #e1e1ae; border-bottom-color: #c9c99b; padding-left: 3px; font-size: 15px; }
.msg { flex: 1; min-width: 0; background: #fefecb; font-size: 12px; font-weight: bold; line-height: 30px; padding-left: 2px; white-space: nowrap; margin-left: 2px; }
.units { width: 78px; flex: none; background: #52cdae; padding: 2px 1px 1px 6px; margin-left: 1px; }
.units button { width: 100%; height: 27px; display: flex; align-items: center; justify-content: space-between; padding: 0 6px 0 4px; font-size: 15px; font-weight: bold; border: 2px solid #9fe8d6; border-right-color: #22725e; border-bottom-color: #22725e; }
.units i { width: 12px; height: 7px; border: 2px solid #9fe8d6; border-right-color: #22725e; border-bottom-color: #22725e; }

.popup { position: absolute; left: 1730px; right: 2px; top: 233px; height: 258px; border: 1px solid #cfd8de; border-radius: 6px; padding: 0 6px 5px 4px; background: linear-gradient(90deg, #333 0, #566 60%, #9aa 100%); font-weight: bold; font-size: 15px; }
.phead { height: 28px; margin: 0 -6px 0 -4px; display: flex; justify-content: space-between; border-radius: 5px 5px 0 0; background: linear-gradient(90deg, #d24fd2 0, #c98ccf 22px, #c9ccd2 36px, #cdd6dd 70px, #e3d0d6 110px, #b4bcc5 130px, #a6afb8 155px, #c0cad4 176px); }
.phead span { padding-left: 18px; font: 13px/26px "Noto Sans", sans-serif; color: #111; }
.phead button { width: 48px; height: 18px; margin-right: 5px; border: 1px solid #777f88; border-top: 0; border-radius: 0 0 5px 5px; display: grid; place-items: center; }
.pbody { background: #52cdae; border: 1px solid #000; height: 224px; display: flex; flex-direction: column; }
.pmode { height: 18px; background: #9bdbdb; border-bottom: 1px solid #000; text-align: center; line-height: 19px; padding-right: 6px; }
.pbody label { display: flex; align-items: center; height: 29px; background: #9bdbdb; border-bottom: 2px solid #000; gap: 4px; white-space: nowrap; }
.pbody input { appearance: none; width: 8px; height: 8px; flex: none; transform: rotate(45deg); border: 2px solid #b8e6e6; border-right-color: #3f7272; border-bottom-color: #3f7272; margin-left: 2px; }
.pbody input:checked { background: #a01048; border-color: #701030; }
.pbody label span { padding-left: 3px; }
.pclose { margin-top: auto; border-top: 1px solid #000; padding: 2px; }
.pclose button { width: 100%; height: 24px; padding-right: 8px; background: #9bdbdb; border: 2px solid #ccf3f3; border-right-color: #4f7f80; border-bottom-color: #4f7f80; }

.excel { position: absolute; left: 945px; top: 108px; width: 793px; height: 827px; border: 1px solid #b9bdc2; border-radius: 7px 7px 6px 6px; padding: 0 5px 6px; background: linear-gradient(90deg, #6c6e70 0, #2b2d2f 60px, #0a0d10 150px, #0a0d10 660px, #3a3c40 100%); font: 12px/16px "Noto Sans CJK SC", sans-serif; color: #15428b; display: flex; flex-direction: column; }
.xtitle { height: 27px; flex: none; display: flex; align-items: center; position: relative; padding-left: 40px; gap: 10px; }
.qat { width: 44px; height: 20px; border: 1px solid #66696d; border-left: 0; border-radius: 0 10px 10px 0; padding: 2px 0 0 13px; background: #444648; }
.doc { flex: 1; text-align: center; font-size: 13px; line-height: 16px; color: #000; white-space: pre; }
.doc span { display: inline-block; background: #7e8082; box-shadow: 0 0 5px 4px #7e8082; border-radius: 4px; }
.wctl { display: flex; height: 19px; align-self: flex-start; border: 1px solid #aaa; border-top: 0; border-radius: 0 0 5px 5px; overflow: hidden; }
.wctl button { width: 28px; display: grid; place-items: center; border-right: 1px solid #aaa; background: linear-gradient(#a5a7a9, #55585b 50%, #26292c 50%, #4c4f52); }
.wctl .x { width: 46px; border: 0; background: linear-gradient(#d99a8c, #bb4a34 50%, #941c08 50%, #c4502c); }
.orb { position: absolute; left: 9px; top: 6px; width: 36px; height: 36px; border-radius: 50%; display: grid; place-items: center; background: radial-gradient(circle at 50% 35%, #fff, #d5d8dc 60%, #8d9299); border: 1px solid #d8dbe0; z-index: 2; }
.client { flex: 1; min-height: 0; border: 1px solid #0c1a30; background: #bfdbff; display: flex; flex-direction: column; }
.tabs { height: 27px; flex: none; display: flex; align-items: flex-end; gap: 5px; padding-left: 47px; }
.tabs > button { height: 25px; padding: 0 11px 4px; border: 1px solid transparent; border-bottom: 0; }
.tabs .on { background: #eaf2fd; border-color: #8db2e3; border-radius: 4px 4px 0 0; }
.mdi { margin-left: auto; display: flex; align-items: center; gap: 14px; padding: 0 6px 6px; }
.q { width: 14px; height: 14px; border-radius: 50%; background: #2a62c9; color: #fff; font-weight: bold; line-height: 12px; box-shadow: 0 0 0 1px #fff, 0 0 0 2px #6b8fc9; }
.ribbon { height: 105px; flex: none; display: flex; gap: 3px; padding: 2px 2px 2px; border: 1px solid #8db2e3; border-radius: 3px; background: linear-gradient(#dbe7f6, #c7d8ed 20%, #c9dbf0 75%, #e3f1ff); }
.rg { flex: none; display: flex; flex-direction: column; border: 1px solid #9ebbdd; border-radius: 3px; box-shadow: inset 1px 1px 0 #eaf2fb; overflow: hidden; }
.g1 { width: 72px; } .g2 { width: 151px; } .g3 { width: 112px; } .g4 { width: 88px; } .g5 { width: 116px; } .g6 { width: 68px; } .g7 { width: 124px; }
.rb { flex: 1; display: flex; min-height: 0; padding: 3px; }
.rl { height: 19px; flex: none; background: #bcd3ee; color: #3e6aaa; text-align: center; line-height: 19px; position: relative; }
.rl svg { position: absolute; right: 5px; top: 4px; }
.bigb { width: 42px; display: flex; flex-direction: column; align-items: center; }
.bigb > svg:first-child { margin-top: 2px; }
.bigb > span { margin-top: 4px; margin-bottom: 6px; white-space: nowrap; }
.col3 { display: flex; flex-direction: column; gap: 8px; padding: 4px 0 0 5px; }
.rows { flex-direction: column; gap: 3px; padding: 3px 2px 0; }
.r3 { padding-top: 4px; }
.rr { display: flex; gap: 3px; height: 21px; align-items: center; }
.tall { height: 25px; gap: 0; }
.combo { display: flex; align-items: center; height: 26px; background: #eaf2fb; border: 1px solid #abc1de; padding: 0 4px 0 2px; color: #000; }
.combo select { flex: 1; min-width: 0; appearance: none; line-height: 16px; }
.wide { width: 96px; } .size { width: 48px; } .full { width: 81px; }
.bx { display: flex; align-items: center; justify-content: space-around; height: 21px; border: 1px solid #8fafd9; border-radius: 2px; background: linear-gradient(#dde9f7, #c4d7ef); color: #222; }
.w80 { width: 80px; } .w45 { width: 45px; } .w35 { width: 35px; } .w67 { width: 67px; } .w22 { width: 22px; }
.ser { font-family: "Liberation Serif", serif; font-size: 14px; }
.ser.lg { font-size: 16px; }
.az2 { display: flex; align-items: flex-start; }
.acol { border-bottom: 4px solid #e01010; color: #2a52a0; line-height: 12px; padding: 0 3px; }
.wen { font-size: 9px; line-height: 9px; text-align: center; color: #24448c; }
.seg { width: 68px; }
.seg span { flex: 1; height: 19px; display: grid; place-items: center; }
.hot { background: linear-gradient(#fde0a5, #fcb95a); }
.mg { display: flex; align-items: center; gap: 5px; padding-left: 3px; }
.dec { font: bold 9px/9px "Liberation Sans", sans-serif; text-align: right; }
.dec em { color: #2a62c9; font-style: normal; }
.list { display: flex; flex-direction: column; padding: 2px 4px; gap: 4px; justify-content: flex-start; }
.list button { display: flex; align-items: center; gap: 4px; height: 18px; white-space: nowrap; }
.g7 .list { gap: 4px; padding: 0 3px; width: 36px; flex: none; }
.sum { width: 14px; color: #000; font-size: 14px; }
.two > span { margin: 0; line-height: 17px; }
.two > .az { display: flex; align-items: center; height: 34px; margin-bottom: 0; }
.az .ser { color: #3a62a8; font-size: 15px; line-height: 14px; font-weight: bold; }
.az .ser b { color: #a03030; }
.ln { display: flex; align-items: center; gap: 3px; }
.fbar { margin-top: 4px; height: 19px; flex: none; display: flex; background: #fff; border-top: 1px solid #6f93c5; border-bottom: 1px solid #6f93c5; color: #000; }
.nbox { width: 160px; flex: none; display: flex; align-items: center; padding-right: 5px; }
.nbox input { flex: 1; min-width: 0; text-align: center; font: 13px/16px "Liberation Mono", monospace; }
.fx { width: 77px; flex: none; display: flex; justify-content: space-between; align-items: center; padding: 0 6px 0 3px; border-radius: 9px 0 0 9px; background: linear-gradient(#cfe0f6, #a9c6ee); border: 1px solid #8aa8d4; }
.fx i { width: 9px; height: 9px; border-radius: 50%; background: #e6ebf2; border: 1px solid #b5c2d6; }
.fx span { font: italic bold 15px/15px "Liberation Serif", serif; color: #444; }
.fx small { font-size: 11px; }
.ftext { flex: 1; min-width: 0; padding-left: 11px; font: 15px/17px "Liberation Mono", "Noto Sans CJK SC", monospace; white-space: pre; }
.fbar > button { width: 15px; display: grid; place-items: center; background: #cbdef6; border: 1px solid #8aa8d4; }
.ftext .lat, td .lat { font-size: 13px; }

.grid { flex: 1; min-height: 0; margin-top: 5px; display: flex; background: #fff; }
.cells { flex: 1; min-width: 0; overflow: hidden; }
table { width: 100%; table-layout: fixed; border-collapse: separate; border-spacing: 0; color: #000; font: 16px/18px "Liberation Mono", "Noto Sans CJK SC", monospace; }
.c0 { width: 34px; } .ca { width: 149px; } .cb { width: 548px; }
th { font: 13px/17px "Liberation Mono", monospace; color: #30363f; background: #e2ebf7; border-right: 1px solid #9eb6ce; border-bottom: 1px solid #9eb6ce; padding: 0; }
thead th { height: 18px; background: linear-gradient(#f4f7fb, #d6dee9); }
thead .on { background: linear-gradient(#f9d798, #f1bd5f); border-color: #f29536; }
.corner { background: #a9c4e9; }
.corner i { display: block; width: 0; height: 0; margin-left: auto; margin-right: 4px; border: 6px solid transparent; border-right-color: #e6edf6; border-bottom-color: #e6edf6; }
tbody th { vertical-align: bottom; height: 19px; }
td { height: 19px; padding: 0 0 0 2px; border-bottom: 1px solid #000; vertical-align: bottom; }
td div { height: 18px; line-height: 18px; white-space: pre; }
td:nth-child(2) { border-right: 2px solid #000; }
td:nth-child(3) { border-right: 1px solid #000; }
td:nth-child(4) { border-bottom-color: #d0d7e5; }
.hl td:nth-child(3) { background: #ff0; }
.sel th { background: #ffd58d; border-color: #f29536; }
.sel td:nth-child(3) { box-shadow: inset 0 1px 0 #000, inset 0 -1px 0 #000; }
.big td { height: 29px; font-size: 24px; }
.big td div { height: 28px; line-height: 28px; padding-left: 3px; font-weight: 500; }
.big td .lat { font-size: 20px; font-weight: bold; }
.vs { width: 16px; flex: none; background: linear-gradient(90deg, #7191c4, #8fabd8); display: flex; flex-direction: column; align-items: center; padding: 2px 0 5px; }
.split { width: 13px; height: 5px; background: #fff; border: 1px solid #5b7bb0; }
.vs > svg:nth-child(2) { margin-top: 8px; }
.thumb { width: 14px; height: 126px; margin: 22px 0 auto; border: 1px solid #5d7cae; border-radius: 2px; background: repeating-linear-gradient(#7f8ea6 0 1px, transparent 1px 3px) center / 8px 9px no-repeat, linear-gradient(90deg, #fbfcfe, #ccd7e7); }

.stabs { height: 16px; flex: none; display: flex; background: #9dbbe6; color: #111; }
.nav { width: 66px; flex: none; display: flex; align-items: center; justify-content: space-around; background: #c3d8f3; }
.st { width: 52px; background: #fff; font-size: 14px; line-height: 15px; color: #123; white-space: nowrap; }
.nt { width: 44px; padding-left: 9px; background: linear-gradient(120deg, #fff 0 6px, #c8dbf4 7px 32px, transparent 33px); }
.hs { margin-left: auto; width: 306px; display: flex; align-items: center; gap: 7px; background: #7b9ccf; margin-right: 16px; }
.sp { width: 8px; height: 15px; background: #5b7bb0; border: 1px solid #fff; border-width: 1px 3px; }
.ht { width: 190px; height: 14px; margin-right: auto; border: 1px solid #5d7cae; border-radius: 2px; background: repeating-linear-gradient(90deg, #7f8ea6 0 1px, transparent 1px 2px) center / 7px 8px no-repeat, linear-gradient(#fbfcfe, #bccbe2); }
.status { height: 22px; flex: none; display: flex; align-items: center; padding: 0 3px 0 7px; background: linear-gradient(#d5e4f8, #a9c5ee 45%, #8cb0e4); }
.ready { width: 33px; border-right: 1px solid #8fafd9; margin-right: auto; color: #111; line-height: 21px; }
.views { display: flex; border: 1px solid #7f9fce; margin-right: 8px; }
.views span { width: 18px; height: 17px; display: grid; place-items: center; background: #c5d4ea; }
.views .hot { background: #fcc96f; }
.pct { width: 41px; }
.rnd { width: 15px; height: 15px; border-radius: 50%; border: 1px solid #44639b; background: #eef4fc; line-height: 12px; font-weight: bold; color: #223c6c; flex: none; }
.status input { width: 103px; appearance: none; height: 12px; background: linear-gradient(#3f62a0, #3f62a0) center / 100% 1px no-repeat; }
.status input::-webkit-slider-thumb { appearance: none; width: 9px; height: 12px; background: #dfe9f8; border: 1px solid #44639b; border-radius: 1px 1px 5px 5px; }
.status > svg { margin: 6px 0 0 8px; }
</style>
